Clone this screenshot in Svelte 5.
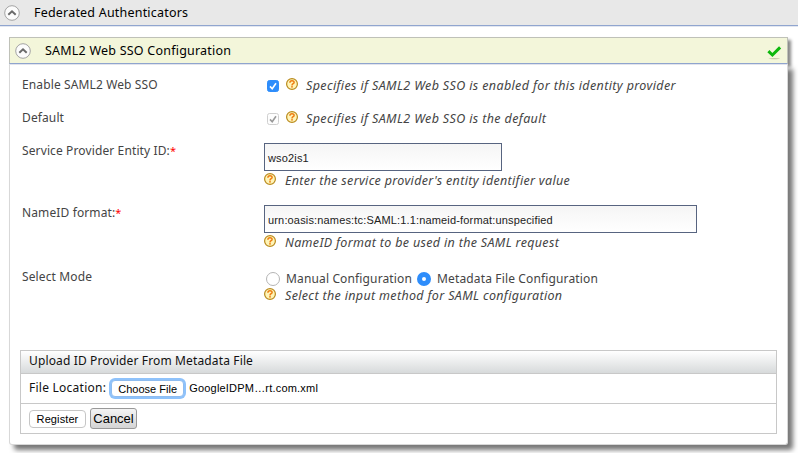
<script>
  const hints = {
    enable: 'Specifies if SAML2 Web SSO is enabled for this identity provider',
    standard: 'Specifies if SAML2 Web SSO is the default',
    entity: "Enter the service provider's entity identifier value",
    nameId: 'NameID format to be used in the SAML request',
    mode: 'Select the input method for SAML configuration'
  };
</script>

{#snippet toggle()}
  <svg class="toggle" width="17" height="17" viewBox="0 0 17 17">
    <circle cx="8" cy="8" r="7.3" fill="#fcfcfc" stroke="#a3a3a3" stroke-width="1" />
    <path d="M4.3 9.8 8 6.3 11.7 9.8" fill="none" stroke="#6a6a6a" stroke-width="2" />
  </svg>
{/snippet}

{#snippet help()}
  <svg class="help" width="12" height="12" viewBox="0 0 12 12">
    <circle cx="6" cy="6" r="5.4" fill="#fff5b8" stroke="#b98a1c" stroke-width="1.2" />
    <path d="M3.9 4.7C3.9 2.1 8.1 2.2 8.1 4.4 8.1 5.7 6 5.7 6 7.4" fill="none" stroke="#ee7d12" stroke-width="1.5" />
    <rect x="5.2" y="8.1" width="1.6" height="1.5" fill="#ee7d12" />
  </svg>
{/snippet}

{#snippet check(on)}
  <svg class="check" width="12" height="12" viewBox="0 0 12 12">
    <rect x=".5" y=".5" width="11" height="11" rx="2" fill={on ? '#2e8dfb' : '#fdfdfd'} stroke={on ? '#2e8dfb' : '#cfcfcf'} />
    <path d="M3 6.4 5.2 8.7 9 3.2" fill="none" stroke={on ? '#fff' : '#999'} stroke-width="1.6" />
  </svg>
{/snippet}

<div class="page">
  <header class="outer">
    {@render toggle()}
    <h2>Federated Authenticators</h2>
  </header>

  <section class="panel">
    <header class="inner">
      {@render toggle()}
      <h2>SAML2 Web SSO Configuration</h2>
      <svg class="ok" width="15" height="14" viewBox="0 0 15 14">
        <path d="M1.4 5.2 5.4 9 13.1 1.4" fill="none" stroke="#0cb80c" stroke-width="3" />
        <ellipse cx="7.3" cy="12.6" rx="5.8" ry=".6" fill="#c6c8a8" />
      </svg>
    </header>

    <div class="body">
      <div class="row r1">
        <div class="label">Enable SAML2 Web SSO</div>
        <div class="field inline">{@render check(true)}{@render help()}<em class="e1">{hints.enable}</em></div>
      </div>
      <div class="row r2">
        <div class="label">Default</div>
        <div class="field inline">{@render check(false)}{@render help()}<em class="e2">{hints.standard}</em></div>
      </div>
      <div class="row r3">
        <div class="label">Service Provider Entity ID:<b>*</b></div>
        <div class="field">
          <div class="input short"><span class="v1">wso2is1</span></div>
          <div class="hint">{@render help()}<em class="e3">{hints.entity}</em></div>
        </div>
      </div>
      <div class="row r4">
        <div class="label">NameID format:<b>*</b></div>
        <div class="field">
          <div class="input long"><span class="v2">urn:oasis:names:tc:SAML:1.1:nameid-format:unspecified</span></div>
          <div class="hint">{@render help()}<em class="e4">{hints.nameId}</em></div>
        </div>
      </div>
      <div class="row r5">
        <div class="label">Select Mode</div>
        <div class="field">
          <div class="radios">
            <i class="radio"></i><span>Manual Configuration</span>
            <i class="radio on"></i><span>Metadata File Configuration</span>
          </div>
          <div class="hint">{@render help()}<em class="e5">{hints.mode}</em></div>
        </div>
      </div>

      <div class="upload">
        <div class="uhead"><span>Upload ID Provider From Metadata File</span></div>
        <div class="ufile">
          <span class="u2">File Location:</span>
          <button class="choose"><span>Choose File</span></button>
          <span class="fname">GoogleIDPM…rt.com.xml</span>
        </div>
        <div class="uact">
          <button class="register"><span>Register</span></button>
          <button class="cancel"><span>Cancel</span></button>
        </div>
      </div>
    </div>
  </section>
</div>

<style>
  :global(body) { margin: 0; background: #fff; overflow: hidden; }
  .page {
    width: 798px; height: 453px; overflow: hidden; background: #fff;
    font: 12px/16px 'Noto Sans', 'Open Sans', sans-serif; color: #444;
  }
  .page * { box-sizing: border-box; }
  svg { display: block; flex: none; }
  span, em, h2, .label { white-space: nowrap; }
  h2 { margin: 0; font-size: 12.5px; line-height: 16px; font-weight: 400; color: #000; }
  .outer {
    display: flex; height: 26px; padding: 5px 0 0 4px; background: #e8e8e8;
    border-bottom: 1px solid #90a5cf; box-shadow: 0 1px 0 #e3e7f0;
  }
  .outer h2 { margin-left: 13px; letter-spacing: .2px; }
  .panel { margin: 11px 10px 0 9px; }
  .inner {
    display: flex; height: 27px; padding: 5px 5px 0; background: #f3f6da;
    border: 1px solid #bfc1b8; border-bottom-color: #90a5cf;
    box-shadow: 3px 3px 3px #888;
  }
  .inner h2 { margin-left: 13px; letter-spacing: .22px; }
  .ok { margin: 3px 0 0 auto; }
  .body {
    position: relative; height: 381px; padding: 11px 10px 0; background: #fff;
    border: 1px solid #d8d8d8; border-top-color: #e2e4ec; border-radius: 0 0 3px 3px;
    box-shadow: 5px 5px 5px #777;
  }
  .row { display: flex; padding-left: 2px; }
  .r1, .r2 { height: 33px; }
  .r3 { height: 62px; }
  .r4 { height: 64px; }
  .r5 { height: 82px; }
  .label { width: 242px; flex: none; padding-top: 1px; letter-spacing: .12px; }
  .label b { color: #f00; font-weight: 400; font-size: 11px; line-height: 1; }
  .inline { display: flex; padding-left: 3px; }
  .inline .check { margin-top: 4px; }
  .inline .help { margin: 2px 0 0 7px; }
  em { font-size: 12.5px; }
  .inline em { margin: 2px 0 0 8px; }
  .e1, .e2 { letter-spacing: .37px; }
  .e3 { letter-spacing: .32px; }
  .e4 { letter-spacing: .33px; }
  .e5 { letter-spacing: .34px; }
  .input {
    height: 28px; margin-top: 1px; padding: 7px 3px 0; border: 1px solid #576480;
    background: linear-gradient(#f5f5f5, #fff); color: #222;
    font: 11px/14px 'Liberation Sans', Arial, sans-serif;
  }
  .v1, .v2 { letter-spacing: .16px; }
  .short { width: 238px; }
  .long { width: 433px; }
  .hint { display: flex; }
  .hint .help { margin-top: 2px; }
  .hint em { margin: 2px 0 0 9px; }
  .radios { display: flex; height: 18px; padding: 4px 0 0 2px; }
  .radio { width: 14px; height: 14px; border: 1px solid #b5b5b5; border-radius: 50%; background: #fff; }
  .radio.on { margin-left: 5px; border: 5px solid #2e8dfb; }
  .radios span { margin-left: 6px; line-height: 14px; letter-spacing: .14px; }
  .upload { width: 757px; height: 84px; border: 1px solid #c8c8c8; color: #111; }
  .uhead { height: 23px; padding: 2px 8px; border-bottom: 1px solid #c8c8c8; background: linear-gradient(#fff, #d7dadb); letter-spacing: .14px; }
  .ufile { display: flex; align-items: center; height: 30px; padding-left: 8px; border-bottom: 1px solid #c8c8c8; }
  .u2 { letter-spacing: .25px; margin-top: -1px; }
  .uact { display: flex; align-items: center; height: 29px; padding-left: 8px; }
  button, .fname { font: 11px/14px 'Liberation Sans', Arial, sans-serif; color: #000; }
  button { padding: 0; display: flex; justify-content: center; align-items: center; background: #fff; }
  .choose { width: 73px; height: 17px; margin-left: 5px; border: 1px solid #8ebcf0; border-radius: 4px; box-shadow: 0 0 0 2px #8ec2fb; }
  .fname { margin-left: 5px; margin-top: -1px; letter-spacing: .2px; }
  .register { width: 57px; height: 18px; border: 1px solid #c6c6c6; border-radius: 4px; letter-spacing: .1px; }
  .cancel { width: 47px; height: 21px; margin-left: 4px; border: 1px solid #999; border-radius: 3px; background: linear-gradient(#f4f4f4, #d4d4d4); font-size: 13px; }
</style>
